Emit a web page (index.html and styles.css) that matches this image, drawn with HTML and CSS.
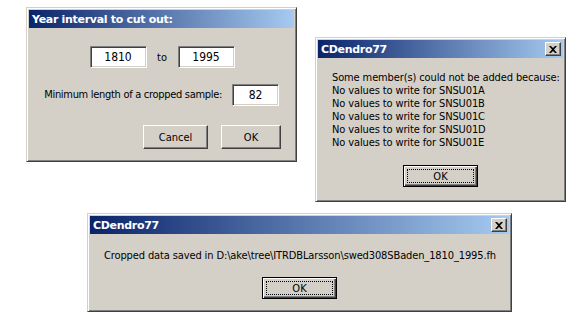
FILE: index.html
```html
<!DOCTYPE html>
<html lang="en">
<head>
  <meta charset="UTF-8" />
  <title>CDendro77 dialogs</title>
  <link rel="stylesheet" href="styles.css">
</head>
<body>
  <div class="desk">

    <!-- Year interval dialog -->
    <div class="win win-year">
      <div class="title">Year interval to cut out:</div>
      <div class="body year-body">
        <div class="years">
          <div class="field w57">1810</div>
          <span class="to">to</span>
          <div class="field w57">1995</div>
        </div>
        <div class="minrow">
          <span>Minimum length of a cropped sample:</span>
          <div class="field w48">82</div>
        </div>
        <div class="btnrow">
          <div class="btn cancel">Cancel</div>
          <div class="btn ok60">OK</div>
        </div>
      </div>
    </div>

    <!-- Members message -->
    <div class="win win-members">
      <div class="title">CDendro77<div class="close"><svg width="8" height="7" viewBox="0 0 8 7"><path d="M0 0h2l2 2 2-2h2L5 3.5 8 7H6L4 5 2 7H0l3-3.5z" fill="#000"/></svg></div></div>
      <div class="body msg-body">
        <div class="lines">
          <div>Some member(s) could not be added because:</div>
          <div>No values to write for SNSU01A</div>
          <div>No values to write for SNSU01B</div>
          <div>No values to write for SNSU01C</div>
          <div>No values to write for SNSU01D</div>
          <div>No values to write for SNSU01E</div>
        </div>
        <div class="btn default"><span class="focus">OK</span></div>
      </div>
    </div>

    <!-- Saved message -->
    <div class="win win-saved">
      <div class="title">CDendro77<div class="close"><svg width="8" height="7" viewBox="0 0 8 7"><path d="M0 0h2l2 2 2-2h2L5 3.5 8 7H6L4 5 2 7H0l3-3.5z" fill="#000"/></svg></div></div>
      <div class="body saved-body">
        <div class="lines">Cropped data saved in D:\ake\tree\ITRDBLarsson\swed308SBaden_1810_1995.fh</div>
        <div class="btn default"><span class="focus">OK</span></div>
      </div>
    </div>

  </div>
</body>
</html>
```

FILE: styles.css
```css
* {
  box-sizing: border-box;
}
body {
  margin: 0;
  background: #fff;
  font-family: "DejaVu Sans Condensed", "DejaVu Sans", sans-serif;
  font-size: 11px;
  color: #000;
}

.desk {
  position: relative;
  width: 586px;
  height: 321px;
}

/* windows sit on a free canvas */
.win {
  position: absolute;
  display: flex;
  flex-direction: column;
  background: #d4d0c8;
  border: 1px solid;
  border-color: #d4d0c8 #404040 #404040 #d4d0c8;
  box-shadow: inset 1px 1px #fff, inset -1px -1px #808080;
  padding: 2px;
  white-space: nowrap;
}
.win-year { left: 26px; top: 7px; width: 271px; height: 155px; }
.win-members { left: 315px; top: 37px; width: 251px; height: 165px; }
.win-saved { left: 87px; top: 213px; width: 425px; height: 99px; }

.title {
  height: 18px;
  display: flex;
  align-items: center;
  justify-content: space-between;
  padding: 0 2px 0 3px;
  background: linear-gradient(to right, #0a246a, #a6caf0);
  color: #fff;
  font-family: "DejaVu Sans", sans-serif;
  font-weight: bold;
  font-size: 11px;
  letter-spacing: -0.3px;
}

.close {
  width: 16px;
  height: 14px;
  display: flex;
  align-items: center;
  justify-content: center;
  background: #d4d0c8;
  border: 1px solid;
  border-color: #fff #404040 #404040 #fff;
  box-shadow: inset -1px -1px #808080;
}

.body {
  flex: 1;
  display: flex;
  flex-direction: column;
}

.field {
  flex: none;
  height: 22px;
  background: #fff;
  border: 1px solid;
  border-color: #808080 #fff #fff #808080;
  box-shadow: inset 1px 1px #404040, inset -1px -1px #d4d0c8;
  display: flex;
  align-items: center;
  justify-content: center;
  font-size: 12px;
  letter-spacing: 0;
}
.w57 { width: 57px; }
.w48 { width: 47px; }

.btn {
  height: 24px;
  background: #d4d0c8;
  border: 1px solid;
  border-color: #fff #404040 #404040 #fff;
  box-shadow: inset -1px -1px #808080;
  display: flex;
  align-items: center;
  justify-content: center;
}
.cancel { width: 65px; }
.ok60 { width: 60px; }

.btn.default {
  width: 75px;
  height: 22px;
  border: 1px solid #000;
  box-shadow: inset 1px 1px #fff, inset -1px -1px #404040, inset -2px -2px #808080;
  align-self: center;
  padding: 3px;
}
.focus {
  width: 100%;
  height: 100%;
  border: 1px dotted #000;
  display: flex;
  align-items: center;
  justify-content: center;
}

.year-body {
  padding: 18px 13px 0 19px;
}
.years {
  display: flex;
  align-items: center;
  justify-content: center;
  gap: 6px;
  margin-right: 2px;
  margin-left: -3px;
}
.to {
  width: 19px;
  text-align: center;
}
.minrow {
  display: flex;
  align-items: center;
  justify-content: flex-end;
  gap: 10px;
  margin-top: 16px;
  margin-right: 2px;
  height: 21px;
  letter-spacing: -0.3px;
}
.btnrow {
  display: flex;
  justify-content: flex-end;
  gap: 13px;
  margin-top: 20px;
}

.lines {
  line-height: 13px;
  letter-spacing: -0.12px;
}
.msg-body {
  padding: 13px 0 0 14px;
}
.msg-body .btn {
  margin: 16px 0 0 -14px;
}
.saved-body {
  padding: 15px 0 0 14px;
}
.saved-body .btn {
  margin: 15px 0 0 -14px;
}
```
